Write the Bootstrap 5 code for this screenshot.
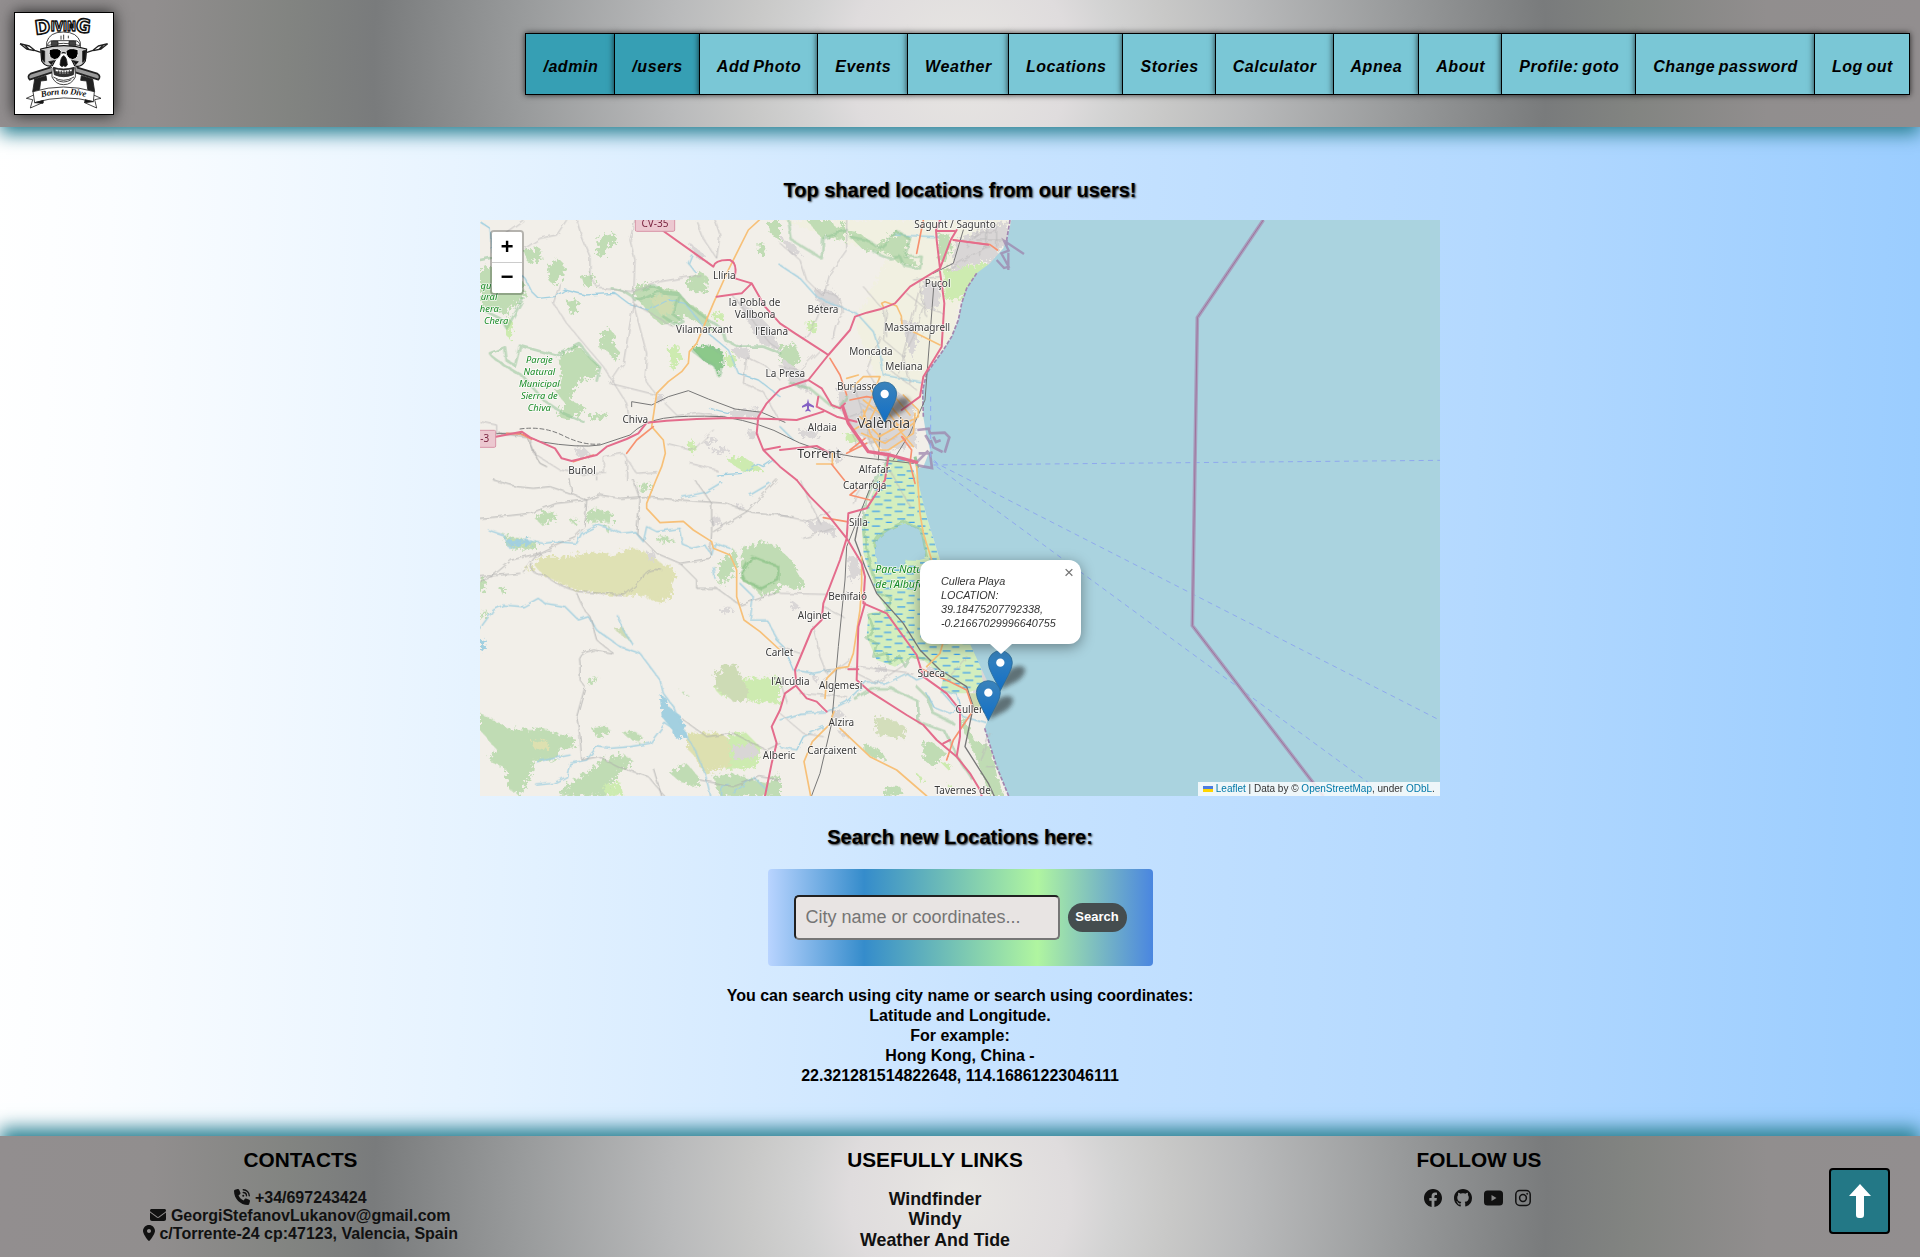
<!DOCTYPE html>
<html lang="en">
<head>
<meta charset="utf-8">
<title>Diving locations</title>
<link rel="stylesheet" href="https://cdn.jsdelivr.net/npm/bootstrap@5.3.0/dist/css/bootstrap.min.css">
<script src="https://cdn.jsdelivr.net/npm/bootstrap@5.3.0/dist/js/bootstrap.bundle.min.js"></script>
<style>
body{font-family:"Liberation Sans",Arial,sans-serif;color:#000;min-height:1257px;line-height:1.25;overflow-x:hidden;
 background:linear-gradient(92deg,#fff 0,#fbfdff 6%,#e4f2ff 27%,#c8e3ff 52%,#b4d9ff 76%,#99ccff 100%)}
.metal{background:radial-gradient(circle,#e8e6e3 0,#dfdcdd 11.5%,#d3d3d3 16%,#c8c8c7 22%,#b9babb 30%,#989a9b 46%,#797b7c 61%,#828481 70%,#918e8e 84%,#928e8f 100%);z-index:2}
header.metal{height:127px;padding:0 10px 0 14px;box-shadow:0 7px 17px #2c8294}
.logo-box{width:100px;height:103px;border:1px solid #000;background:#fff;box-shadow:0 0 14px #222}
.menu-bar{height:62px;margin-top:1px}
.menu-bar a{display:flex;align-items:center;padding:5px 16px 0 17px;margin-left:-1px;border:1px solid #000;background:#7ac7d6;color:#000;font:italic bold 16px "Liberation Sans",Arial,sans-serif;letter-spacing:.56px;word-spacing:-1.500px;text-decoration:none;box-shadow:0 0 6px rgba(0,0,0,.75);white-space:nowrap}
.menu-bar a.staff{background:#369fb4}
.main-title{font-size:20px;font-weight:bold;line-height:24px;text-shadow:1px 1px 2px #333;margin:0}
.map-box{width:960px;height:576px;margin-top:18px;overflow:hidden;background:#f2efe9}
.map-box>svg{display:block}
.zoom-ctl{left:10px;top:10px;width:34px;border:2px solid rgba(0,0,0,.25);border-radius:4px;background-clip:padding-box}
.zoom-ctl span{display:block;height:30px;background:#fff;text-align:center;font:bold 22px/34px "Liberation Mono",monospace;color:#000}
.zoom-ctl span:first-child{border-bottom:1px solid #ccc;height:31px;border-radius:2px 2px 0 0}
.zoom-ctl span:last-child{border-radius:0 0 2px 2px;line-height:32px}
.pop-up{left:440px;top:340px;width:161px;height:84px;background:#fff;border-radius:12px;box-shadow:0 3px 14px rgba(0,0,0,.4);padding:14px 0 0 21px;font:italic 10.8px/14px "Liberation Sans",Arial,sans-serif;color:#333}
.pop-up::after{content:"";position:absolute;left:70px;top:84px;border:11px solid transparent;border-top:10px solid #fff;border-bottom:0}
.pop-close{right:7px;top:5px;font:normal 17px/16px "Liberation Sans",Arial,sans-serif;color:#757575}
.attrib{right:0;bottom:0;height:14px;width:242px;padding:0 5px;background:rgba(255,255,255,.8);font-size:10px;line-height:14px;color:#333;white-space:nowrap}
.attrib a{color:#0078a8;text-decoration:none}
.search-box{width:385px;height:97px;margin-top:20px;padding:0 26px;border-radius:4px;background:linear-gradient(90deg,#b9d4ff 0,#358ccb 25%,#b0f5a0 70%,#4a86e0 100%)}
.search-box input{width:266px;height:45px;border:2px inset #767676;border-radius:5px;background:#e8e4e3;padding:0 10px;font-size:18px}
.search-box input::placeholder{color:#757575}
.search-box button{width:59px;height:29px;margin-left:8px;border:0;border-radius:15px;background:#454d4f;color:#fff;font-size:13px;font-weight:bold;padding:0}
.hint{font-size:16px;font-weight:bold;line-height:20px;margin:20px 0 0;text-align:center}
footer.metal{height:121px;box-shadow:0 -8px 17px #2c8294;padding-top:12px;font-weight:bold;display:grid;grid-template-columns:601px 668px 420px 1fr}
footer h2{font-size:20.8px;font-weight:bold;line-height:24px;margin:0}
.contact-list{color:#111;font-size:16px;line-height:18px;margin-top:17px}
.contact-list svg{vertical-align:-2px}
.link-list{color:#111;font-size:17.8px;line-height:20.5px;margin-top:16.5px}
.social-row{gap:12px;margin-top:17px;padding-right:4px}
.up-btn{width:61px;height:66px;border:2px solid #000;border-radius:4px;background:#237886;margin:20px 30px 0 0}
.gr{fill:#c0dcb4}.gs{fill:#cdebb0}.ub{fill:#d9d6d6}
.mn,.mw,.pr,.rl,.rv,.pk,.sc{fill:none;stroke-linejoin:round;stroke-linecap:round}
.mn{stroke:#bcbabb;stroke-width:2.6}.mw{stroke:#e46c8c;stroke-width:6}.pr{stroke:#f7c078;stroke-width:5}
.sc{stroke:#f7916f;stroke-width:5}.rl{stroke:#777;stroke-width:3}.rv{stroke:#a3d0e0;stroke-width:4}
.pk{stroke:#8cc192;stroke-opacity:.5;stroke-width:8}
.lb text{font:30px "Noto Sans",sans-serif;fill:#3a3a3a;paint-order:stroke;stroke:#fff;stroke-opacity:.75;stroke-width:5px;stroke-linejoin:round;text-anchor:middle}
.lb .big{font-size:41px}.lb .nat{font-style:italic;font-size:28px;fill:#178a24}
.lb .end{text-anchor:end}
</style>
</head>
<body class="d-flex flex-column">
<header class="metal d-flex align-items-center justify-content-between position-relative">
 <div class="logo-box">
 <svg width="98" height="101" viewBox="45 40 294 303" fill="none" stroke="#222" stroke-width="2.5" stroke-linejoin="round">
  <g font-family="DejaVu Sans" font-weight="bold" fill="#fff" stroke="#111" stroke-width="5">
   <text x="107" y="104" font-size="58" textLength="46" lengthAdjust="spacingAndGlyphs" transform="rotate(-7 120 100)">D</text>
   <text x="152" y="93" font-size="42" textLength="76" lengthAdjust="spacingAndGlyphs">IVIN</text>
   <text x="226" y="98" font-size="56" textLength="44" lengthAdjust="spacingAndGlyphs" transform="rotate(7 245 95)">G</text>
  </g>
  <path d="M60 132L88 139 104 152 122 158M60 132L80 148 103 153M74 136l14 14M323 132l-28 7-16 13-18 6M323 132l-20 16-23 5M310 136l-14 14" stroke-width="4"/>
  <path d="M152 203L92 222Q80 230 89 240L156 218M230 203l62 19q12 8 3 18L226 218" fill="#999" stroke-width="5"/>
  <path d="M104 238l-6 38h20l4-32 18-2-2-14zM278 238l6 38h-20l-4-32-18-2 2-14z" fill="#222"/>
  <path d="M140 150V128Q148 97 190 97Q232 97 241 128V150L250 180 226 205V232Q215 255 191 255Q167 255 156 232V205L131 180z" fill="#fff"/>
  <path d="M142 138q4-15 16-15h66q14 0 16 15-50-14-98 0z" fill="#fff"/><path d="M154 125h20v12h-20zM207 125h20v12h-20z" fill="#444"/>
  <path d="M122 148q70-20 138 0l-4 36q-14 22-32 14l-17-34q-17-10-32 0l-18 34q-19 6-32-14z" fill="#ccc" stroke="#111" stroke-width="3.5"/>
  <path d="M124 152l10 2v34l-9-10zM258 152l-10 2v34l9-10z" fill="#111"/>
  <path d="M148 150q30-9 36 6-1 20-20 24-20-4-16-30zM234 150q-30-9-36 6 1 20 20 24 20-4 16-30z" fill="#000" stroke="#eee" stroke-width="3"/>
  <path d="M180 196q2-25 11-28 9 3 11 28-5 8-11 2-6 6-11-2zM146 186l16-3-8 12zM235 186l-16-3 8 12z" fill="#111"/>
  <path d="M160 203q30 10 63 0l-3 22q-29 12-57 0z" fill="#333"/><path d="M166 208q25 7 50 0v7q-25 7-50 0zM169 219q22 6 45 0" fill="#fff" stroke-width="1.5"/>
  <path d="M176 212v10M184 213v10M192 213v10M200 213v10M208 211v10M160 232q30 20 62 0M168 240q22 14 46 0M183 108v12M191 105v15M205 108v8"/>
  <path d="M101 286L79 296 98 300 91 325 130 308zM281 286l22 10-19 4 6 25-38-17z" fill="#fff"/>
  <path d="M99 276Q190 248 283 276L280 306Q190 282 104 309z" fill="#fff"/>
  <path d="M104 309l26-7-1 9zM280 306l-25-6v9z" fill="#111"/>
  <path id="ribbon" d="M120 294Q190 274 264 293" stroke="none"/>
  <text font-family="Liberation Serif" font-style="italic" font-weight="bold" font-size="26" fill="#111" stroke="none"><textPath href="#ribbon" startOffset="5" textLength="134">Born to Dive</textPath></text>
 </svg>
 </div>
 <nav class="menu-bar d-flex">
  <a class="staff">/admin</a><a class="staff">/users</a><a>Add Photo</a><a>Events</a><a>Weather</a><a>Locations</a><a>Stories</a><a>Calculator</a><a>Apnea</a><a>About</a><a>Profile: goto</a><a>Change password</a><a>Log out</a>
 </nav>
</header>
<main class="d-flex flex-column align-items-center flex-grow-1" style="padding-top:51px">
 <h1 class="main-title">Top shared locations from our users!</h1>
 <div class="map-box position-relative">
 <svg width="960" height="576" viewBox="0 0 2880 1728">
  <defs>
   <filter id="rag" x="-10%" y="-10%" width="120%" height="120%"><feTurbulence type="fractalNoise" baseFrequency=".09" numOctaves="3" seed="4"/><feDisplacementMap in="SourceGraphic" scale="34"/></filter>
   <filter id="wob" x="-5%" y="-5%" width="110%" height="110%"><feTurbulence type="fractalNoise" baseFrequency=".04" numOctaves="2" seed="7"/><feDisplacementMap in="SourceGraphic" scale="14"/></filter>
   <filter id="soft" x="-30%" y="-30%" width="160%" height="160%"><feGaussianBlur stdDeviation="7"/></filter>
   <pattern id="marsh" width="68" height="44" patternUnits="userSpaceOnUse"><rect width="68" height="44" fill="#d4eebe"/><path d="M4 6h24M40 17h22M12 29h24M46 39h18" stroke="#3b9ff0" stroke-width="3.400"/></pattern>
   <linearGradient id="pinfill" x2="0" y2="1"><stop stop-color="#3a83bb"/><stop offset="1" stop-color="#126fc6"/></linearGradient>
   <g id="pin">
    <path d="M0-3L10-42 32-66Q62-82 74-66 76-48 52-30z" fill="#222" opacity=".55" filter="url(#soft)"/>
    <path d="M0 0L-25-49Q-36-70-36-84A36 36 0 0 1 36-84Q36-70 25-49z" fill="url(#pinfill)" stroke="#2e6c97" stroke-width="2.500"/><circle cy="-84" r="12.500" fill="#fff"/>
   </g>
  </defs>
  <!-- land cover -->
  <g filter="url(#rag)">
   <g transform="translate(0 -150)">
    <path class="gr" d="M355 205l30-10 20-5 5 20-30 25-10 25-25-5 10-25zM205 290l30-25 20 20-5 30-30 30-15-15zM305 320l35-12 5 35-30 10zM130 240l50-5 5 30-40 15zM262 395l35-5-5 30-20 15zM360 500l25-30 20 25-5 30 18 20-15 28-20-30-22-5zM620 330l40-25 22 15-5 45-30 5-25-10zM835 220h18v35h-16zM0 300l40-15 90 50 5 40-60 60-75-30z"/>
    <path class="gr" d="M470 350q30-15 60 0l60 10 30 35 60 40 20 50-30-20-60-30-15 20-50 10-30-25-35-45-20-15z"/><path d="M510 385l45-15 25 25-5 35-30 10z" fill="#cfdcb0"/>
    <path class="gr" d="M235 560l60-35 30 35 35 30-15 35-45 5-20 35-10 25 50 25-50 35-40-10 25-40-30-40 20-30z"/>
    <path class="gr" d="M330 735l55-5-5 15-50 8zM860 150h40v60l-30-20z"/><path d="M635 535l40-10 50 15 5 40-15 40-12-30-30-15z" fill="#8cc98a"/>
    <path class="gs" d="M85 440l15 20-10 50-15-20zM565 535l30-10 10 40-30 35zM730 560l35-10 5 35-25 5zM700 430h30v20h-28zM620 830l20-20 10 30-20 8zM740 870l50-10 60 40-60 5z"/>
    <path class="ub" d="M630 220l45 35-5 20-30-20zM285 835l25-5 25 25-40 10zM530 670l22 5-2 20-24 4zM770 390l50 30 60 60 20 60-60-20-40-70zM750 720l90-5v30l-90-5zM690 840l50-10 5 15-50 5zM800 785l30-2v25h-25zM750 535l50-5 10 30-30 10zM670 815l35-15 5 12-30 15z"/>
   </g>
   <g transform="translate(900 -150)">
    <path d="M0 150h690l-20 90-90 60-40 100-20 110-70 80-20 70 4 90-60-10-30 20-120-300 100-200z" fill="#f0f0dc" opacity=".6"/>
    <path class="gr" d="M80 150h70l20 25 25-20v60l-40-15-30 5zM210 185l30 5 50 40 60-45 40 15-15 60 35 15-10 15-50-15-20-25-80-10-40-40zM475 195l30-5 10 40-20 50-20-10zM0 530l45-10 15 40-20 40-40-25z"/>
    <path class="gs" d="M490 300l60-10 80-10-55 80-30 25-50 5z"/><path d="M80 455l30 0-5 35-25-10z" class="gs"/>
    <path class="ub" d="M0 200l45 25 20 30-35-5zM530 210l150-60 10 65-40 30 20 20-100 20-60 20zM100 355l70 10 15 45-60 15zM360 445l60 20-5 40-20 60zM0 560l70 50 20 60-60-30zM170 660l150-20 80 60 10 130-90 10-90-50-50-70zM130 840l60 5-5 30-50-5zM310 840l50 20-10 60-30-10zM60 780l60 5-10 20-50-5zM425 330l60 20-10 60-40 10z"/>
    <path class="gs" d="M190 795l40-8 8 28-35 5z"/>
   </g>
   <g transform="translate(0 780)">
    <path d="M160 250l30-20h80l70-15 60 10 50-20 40 8 60 40 20 30 10 60-35 28-60-25h-80l-120-15-100-50z" fill="#dfe1b4"/>
    <path d="M160 265l-30 10 30-25zM500 260l55-5 25 5 8 30-35 65-45-20z" fill="#dfe1b4"/>
    <path d="M500 218l25-3 3 25-22 3zM735 140l40-12M760 80l30-5v15zM690 120l25-12 12 20-30 15zM730 380l30 5-10 15-25 5z" class="ub"/>
    <path class="gr" d="M165 115l30-20 35 5-5 15-40 20zM315 105l30-18 55 10-5 35-30-10-45 5zM268 125l25-10-5 20zM70 165l25 5 80 15-5 20-60 5-30-10zM525 180l20-12 45 15-30 5zM375 145l15-5-5 20zM475 20l35-15v25l-30 5zM785 205l60-20 55 15v130l-60 20-10-20-45-30zM715 250l50-40 10 30-20 50-40 30zM60 330l15-10v30zM0 295l15-5 3 30-18 25zM0 400l30-10-30 30z"/>
    <path class="gr" d="M0 700l50 25 40 25 100-5 30 15 60 10 5 30-45 10-15 30-65 5-5 40-40 60-30-20-10-60-50-25 25-30-50-60zM240 948l10-25 80-50 40-35 60-15 30 20-30 25-50 55 10 25zM430 760l30-8 30 20-10 15-30-8zM325 600l30-12-10 15-20 15zM335 745l50-8 5 20-40 15zM600 630l20 10-5 8z"/>
    <path class="gs" d="M700 620l40-15 80-10 80-5v80l-80-5-100-20zM745 765l50-10 50 50-20 60-90 5zM370 920l50-15 10 40-50 3z"/>
    <path d="M700 590l35-35 35-5 10 40 20 30 5 40-40 8-30-25-25-10z" fill="#cddbb5"/>
    <path d="M625 760l90-5 30 20 10 80-80 25-35-55-20-20zM155 785l45-5 5 25-40 5z" fill="#dde0b0"/>
    <path d="M570 880l50-30 40 45-10 25-50-15zM700 890l60-10 100 30 40-30v70H720z" class="gr"/>
    <path d="M405 450l25-8 25 45z" fill="#cddbb5"/><path d="M760 800l60-10 20 30-30 15-50 5z" class="ub"/>
    <path d="M540 655l15-5 10 30 40 30 15 60-30 10-20-40-25-30z" fill="#a3d0e0"/><path d="M75 180h80v12l-60 8zM0 480l18-2-5 30-13 5z" fill="#a3d0e0"/>
   </g>
   <g transform="translate(900 780)">
    <path class="gr" d="M0 210l40 35 10 30 25 35-25 20-50-20zM250 790l50 20 20 30-40-5-30-25zM430 780l30 10 40 30-40 40-30-20zM320 920h40l10 25-60 3zM555 710l25 70 50 20 40 148h-40l-40-110-50-110z"/>
    <path d="M285 710l40 5 55 30-10 30-80-10z" fill="#d3debb"/><path class="gs" d="M500 910l20 10-10 10zM410 880l25 20-15 10zM480 845l35 10-10 15z"/>
    <path class="ub" d="M75 130l55-10 40 25-10 20-60-10zM205 230l30-5 5 60-30 20zM35 360l25 20-25 15zM165 345l50-5-10 20zM90 590l20-5v25zM150 700l30-10 20 20-40 10zM170 750l35 10-10 20zM440 560l50 10-5 20-40-5zM280 560l40-3-3 20-35-3zM560 570l50-10 15 80-40 5z"/>
   </g>
  </g>
  <!-- albufera wetland -->
  <g transform="translate(900 780)">
   <path d="M270 60Q300-20 325-70L385-60 415 0 440 110 480 240 600 540 610 620 560 640 480 640 490 590 430 540 390 535 345 560 290 540 260 470 265 400 320 390 290 340 250 220 245 130z" fill="url(#marsh)"/>
   <path d="M288 190l15-25 30-20 45-15 40 15 15 40 5 50-20 5-40-2-10 28-30 5-50-20z" fill="#aad3df" filter="url(#wob)"/>
   <path class="pk" filter="url(#wob)" d="M325-60Q255 40 250 100q0 100 45 240l35 10-5 45-60 10 15 40-20 30 30 15-10 40 40-10 10 30 30-20 15 30 20-30 60 10M285 200q-5-40 90-75l50 25 15 80"/>
   <path d="M570 640l30 0 10 40-30 15z" fill="#cdd9ad"/>
   <path d="M405-70L440 80 500 260 620 560" fill="none" stroke="#9cc79b" stroke-width="9"/>
  </g>
  <!-- sea -->
  <path d="M1594 0L1580 60 1570 85 1530 130 1490 160 1460 205 1445 250 1435 300 1415 350 1390 390 1360 430 1340 460 1328 510 1330 590 1338 640 1350 690 1330 740 1312 745 1315 790 1340 890 1380 1020 1460 1250 1520 1380 1555 1440 1523 1500 1514 1525 1550 1640 1586 1728H2880V0z" fill="#aad3df"/>
  <path d="M1590 0L1580 60M1490 160L1460 205 1445 250 1435 300 1415 350 1390 390 1340 460 1328 510 1330 590M1514 1525L1550 1640 1586 1728" fill="none" stroke="#a387b0" stroke-width="5" stroke-dasharray="12 5"/>
  <path d="M1550 120l22 24 14-4-22-40 22-8-14-30 60 40M1580 60v20M1585 98v52" fill="none" stroke="#9c84ac" stroke-width="7" opacity=".75"/>
  <path d="M1312 630l34-4 4 14 44-2 14 14-14 46M1336 645l18 30M1352 660l8 22 28 14M1360 650l8 16 14-5M1345 692l-34 34M1312 736l44 8-6-44 8-3M1316 700h30" fill="none" stroke="#9c84ac" stroke-width="8" opacity=".75"/>
  <g fill="none" stroke="#8fa9ee" stroke-width="3" stroke-dasharray="15 13"><path d="M1360 735L2880 721M1360 725L2880 1501M1370 740L2720 1728M1352 530v180l20 20"/></g>
  <path d="M2350 0L2152 293 2137 1217 2530 1728" fill="none" stroke="#a79fbe" stroke-width="11"/><path d="M2350 0L2152 293 2137 1217 2530 1728" fill="none" stroke="#a0739c" stroke-width="3"/>
  <!-- water and park outlines -->
  <g filter="url(#wob)">
   <g transform="translate(0 -150)">
    <path class="rv" d="M0 155l30 20 5 70 100 80 20 40 20 20 50-5 30-20 60 15 90-5 40 30 60 20 60-30 50 10 40 50 30 40 60 50 30 70 60 20 65 50M690 715l60 15M880 870l-30 20-20-10-40 30-80 5M635 255l-10 25 20 25"/>
    <path class="pk" d="M395 355q50 5 70 35h20l50-25 60 5 30 35 60 45 40 25 10 35 40 20h75l50 20M30 550l45-18 5 40 25 15 15-60 110 30 70-35 30 40 30 30-10 40M30 550q-5 10 100 70l60 70 60 40 60 25M0 270l40-8M0 415l60 30 20 30 50-90M490 360q40-25 60 10l50 5-20 60 30 20-20 10-40-25"/>
    <path d="M635 540l45-12 45 20 5 30-15 40-10-30-35-20z" class="pk"/>
   </g>
   <g transform="translate(900 -150)"><path class="rv" d="M0 285l60 40 50 55 40 20 80 30 50 55 20 60 10 70 110 20M345 195l130 5M0 770l40 40"/><path class="pk" d="M25 150l10 60 90 55 5-60 70-25M210 200l50 10 40 25 50-50 40 20-15 55 50 0-5 35-50-10-10-25-30 5-50-20M30 640l60 15 60 50 30 5 20-30"/></g>
   <g transform="translate(0 780)">
    <path class="rv" d="M25 150l45 15 20 40 40-25 60 10 40-5 60 5 15-30 50-25 30 10 40 15 40-5 25 30 10-45 30 15 70-10 10 50 25 10 40-10 20 30 10-35 45 15M605 52l70-15 50-30M0 445l40-55 30-15 60 5 45-25 20 15 60 10 40 40 30-10 25 40 70 50 60 20 60 80 10 40 30 40 25 60 50 90 20 50 20 80 60 20 20 50M780 310l40 40-10 70 50 0 35 60M350 800l40 5 60-5 60-10 45-60 30 20M350 800l-30 40-50 10-10 40-40 20-50 5M170 845l100-20M415 410l15 40 30 45M810 45l60-35M700 260l5 35"/>
    <path class="pk" d="M785 280l30-50 80 30v40l-50 25-50-20z" style="stroke:#6fb56f"/>
    <path class="rv" d="M725 948v-30l20-5M760 940l60-50 40 40" stroke-width="3"/>
   </g>
   <g transform="translate(900 780)"><path class="rv" d="M-10 480l20 20 30 70 60 10 50-10M0 720l60-20 80-5 60-30 60-60 60 5 60-30 30 20 50-20M0 800l50 10 20-40 60-30M440 640l20 40 50 20 30-20-10-40-30-5M490 640l60 70 70 20"/><path class="pk" d="M225 655l50-30 60 0 80 40v60l80 30 40 80 40 60M410 620l30 30 20 50 60 30"/></g>
  </g>
  <!-- local roads -->
  <g filter="url(#wob)">
   <g class="mn" transform="translate(0 -150)"><path d="M260 150l-30 45-50 10-45 30M290 150l15 50 25 60v60l20 30 10-5M465 150l-15 60 15 60-5 130-30 180-40 60M360 355l100 10 80-30 120-20M240 340l-20 60 40 60 110 130 70 110 10 60M460 400l120 70M460 400l40 150-5 80 30 40M390 640l60 15 80 20M650 155l20 50 40 60 10-70-15-45M130 150l-70 50M555 700l40 40 60-10 80 10M800 560l-10 80 60 25 50 90M800 560l60 30 40 40M0 755l50 10 0 30 60 0M150 800l10 50 80 50 60 10h80M370 910V860l60-10 40 60 60-5M560 820l80 20 60-60M440 870v60M760 380l50 60 60 80 30 20M630 880l80 20M350 920v10"/><path d="M60 790l80 10 40 80 20 10" stroke="#999"/></g>
   <g class="mn" transform="translate(900 -150)"><path d="M0 220l60 50 20 60 50 50 20-70 50-70v-90M125 370q60-10 65 60-30 30-30 80M250 350l60 70 10 80M130 400l-30 70-30 40M380 370l50 40-30 90-30 60M420 360l20 80M500 300l120-70M320 420l-10 90 60 50 20 80M400 330l80-10M425 330l-70 280M0 590l60 10 60-60M300 500l-40 100 30 50M330 600l80 60M225 660l60 200M330 700l-60 90M240 700l120 70M210 740l150-60M190 700l40 130 120-30M600 260q-10-25 30-30M570 200l80-20M590 210l80 0M620 160v60M650 160v70M560 230l60-80M460 420l30 10M430 470h50"/></g>
   <g class="mn" transform="translate(0 780)"><path d="M0 115l60-5 90-10 80-30 90-10 40-15 60 10 70-5 110 10 140 10 80 30 120 10M40 0l70 20 50 5 50-5 60 20 50 20-5 80-30 30-60 25-50 25-80 20-60 50-70 30M270 0l5 40M460 0l20 60-10 100 60 60 70 30 90-15 5-80 0-85-50-70M130 275l30-45 50-20M155 250q-10 35 40 35 30 30 100 50l140 10 50-45q10-40 60-30M290 340q20 50 40 70l20 70 50 40-60-10q-50 10-40 40v50l15 20-25 90 10 60 5 70 50-10 60 30 90 30 50 60 90 40 20-40 50 15 60 10M600 250l50 50v25l60 0 70 50 120-40M700 155l100-60 90-95M610 720l70 50 80-10 100 50 40-20M520 865l25 83M660 900l100 20 80-30 60 10M0 290l120-10" stroke="#aaa"/></g>
   <g class="mn" transform="translate(900 780)"><path d="M0 105l90 20 60-30M70 175l90-30M330-30l60 110M60 0l60 130M0 340l220 5M130 380l60 30M100 440l20 90 20 50M0 500l60 20M140 570l100-10 160 20M0 700l70 60 60 10M560 530l-60 70M630 760l-30 80M620 860h35M60 640l140 10M0 600l20 70M220 70q10-50 50-60M230 580l60 30 90-60M210 540l-80 60"/></g>
  </g>
  <!-- railways -->
  <g class="rl"><path d="M50 640l70 0 60 25q120 20 180 10l90-30q40-40 100-50t180-5q120 20 190 60t200 60l180 20M455 560v-15l60 10 50-25 60-18 60 25 80 30 80 10 70 30M1362 190L1335 540 1290 640 1240 720M1360 160l60-30 30-100M1200 640l-5 80M1180 780l-80 200-5 100-20 200-20 230-35 150-30 80"/><path d="M1135 910l-10 50 30 80 35 80 80 90 50 80 60 60 80 50 20 60-25 120 70 110 60 130" stroke-width="4"/><path d="M120 627q70-10 130 20t110 25" stroke-dasharray="12 8"/></g>
  <!-- orange roads -->
  <g class="pr"><path d="M838 0L805 30 765 110 745 150 700 250 675 310 650 370 628 395 625 430 605 455 565 485 530 520 522 575 515 620 550 660 556 700 545 740 528 780 500 850 500 865 540 908 610 904 640 930 695 965 700 985 750 1005 770 1050 770 1130 792 1200 840 1235 900 1290M1210 260l-5-10 10-5 35 13 14 30 2 25M1300 335l80 40M1120 500l30-30 50 0-20 50M1100 475l35-10M1150 540l100 80 50 60M1180 520l-30 70M1210 520l-40 80-50 30M1140 590l60 60 80-50M1165 500l100 130M1145 640l70 30 85-60M1195 650l120-60v-20l-45-45M1150 570l20 70 30 50 25 0 75-50 5-60M1220 545l60 70M1240 525l50 60M1145 1010l0 80-5 80-20 130-15 40-35 5-30 30-5 60M1062 1475l-15 40-50 50-25 60 20 103M1080 1525l90 85 80 40 90 78M1310 740l10 140 10 60 25 80M1400 1230l-20 70-40 40M1010 732l50 0M1057 695v35"/></g>
  <g class="sc"><path d="M520 620l-50 40-30 40M1110 540l50-10 60 10M1050 415l30 50 20 60M1100 700l60-30M1110 690l45-35M1330 0l-20 100M1420 60l110 14 22 16M1265 650l30 40-5 40 15 60M1055 733l40 50M1140 800l-30 25 60 15M1030 893l70 12M1320 1345l90 40 50 25 20 60-60 90-20 60M1275 660l-8-10M80 640l40 2M125 643l30 15M280 725l60-20"/></g>
  <!-- motorways -->
  <g class="mw">
   <path d="M550 33L700 140q5-22 50-20 22 10 15 45v10l50 15-30 30-75 10M815 190L855 260 900 310 945 340 1030 395 1045 405M0 650L48 650 125 635 150 652 225 685 245 715 275 723 350 705 380 680 440 657 475 640 500 608 560 602 650 597 750 594 900 598 950 600 1030 575M1010 560l5-30M835 590L860 550 900 508 985 480 1045 405 1110 330 1125 290 1160 278 1200 268 1245 250 1290 200 1380 145M1380 145L1370 60 1368 30 1380 0M1380 145L1412 60 1430 30M1368 33h55M1420 60l105 14M1380 155L1393 250 1385 380 1330 470 1320 530 1265 570M985 480l40 25 30 50 25 10 15-15M1010 560l60 30 60 15M835 590L830 640 850 690 900 740 950 780M900 690L1010 678 1050 700M850 690l50-10"/>
   <g transform="translate(900 780)"><path d="M50 0L90 50 140 100 200 175 245 250 255 290 250 370 320 400 410 525 430 590 500 640 540 690 540 770 530 830M200 175L180 240 130 370 125 420 95 450 45 570 50 620 80 655 110 665 140 695M50 615L15 640 0 690 -25 740 -10 790 -25 850 -45 948M200 175L205 100 260 85 315 0 325-70M255 370L235 440 230 600 270 635 380 705 430 735 470 780 530 830 570 880 600 930 605 948M205 568h30M490 790l20-10"/></g>
  </g>
  <path d="M1088 560L1105 610 1140 660 1165 695 1230 705 1310 727" class="mw" style="stroke-width:10"/>
  <path d="M984 536l3 13 15 9v5l-15-5v9l5 5v3l-8-3-8 3v-3l5-5v-9l-15 5v-5l15-9z" fill="#8461c4"/>
  <!-- names -->
  <g class="lb">
   <g transform="translate(0 -150)">
    <rect x="466" y="120" width="118" height="64" rx="4" fill="#ecc8d0" stroke="#d894a8" stroke-width="3"/><text x="525" y="171" style="fill:#7a2440;stroke:none">CV-35</text>
    <rect x="-20" y="781" width="67" height="51" rx="4" fill="#ecc8d0" stroke="#d894a8" stroke-width="3"/><text x="14" y="817" style="fill:#7a2440;stroke:none">-3</text>
    <g><text class="nat" x="178" y="580">Paraje</text><text class="nat" x="178" y="616">Natural</text><text class="nat" x="178" y="652">Municipal</text><text class="nat" x="178" y="688">Sierra de</text><text class="nat" x="178" y="723">Chiva</text>
    <text class="nat end" x="34" y="357">qu</text><text class="nat end" x="52" y="391">ural</text><text class="nat end" x="65" y="426">hera-</text><text class="nat end" x="85" y="463">Chera</text></g>
    <text x="733" y="327">Llíria</text><text x="824" y="407">la Pobla de</text><text x="825" y="444">Vallbona</text><text x="673" y="489">Vilamarxant</text><text x="875" y="495">l'Eliana</text><text x="916" y="621">La Presa</text><text x="466" y="760">Chiva</text><text x="306" y="911">Buñol</text>
   </g>
   <g transform="translate(900 -150)"><text x="525" y="174">Sagunt / Sagunto</text><text x="473" y="351">Puçol</text><text x="129" y="429">Bétera</text><text x="412" y="483">Massamagrell</text><text x="273" y="555">Moncada</text><text x="372" y="601">Meliana</text><text x="237" y="660">Burjassot</text><text class="big" x="311" y="773">València</text><text x="127" y="782">Aldaia</text><text x="117" y="864" style="font-size:38px">Torrent</text><text x="283" y="908">Alfafar</text></g>
   <g transform="translate(900 780)"><text x="254" y="28">Catarroja</text><text x="235" y="139">Silla</text><text class="nat" style="font-size:32px;text-anchor:start" x="286" y="280">Parc Natural</text><text class="nat" style="font-size:32px;text-anchor:start" x="286" y="323">de l'Albufera</text><text x="203" y="359">Benifaió</text><text x="103" y="417">Alginet</text><text x="-2" y="529">Carlet</text><text x="31" y="615">l'Alcúdia</text><text x="182" y="626">Algemesí</text><text x="454" y="592">Sueca</text><text x="576" y="699">Cullera</text><text x="184" y="737">Alzira</text><text x="156" y="822">Carcaixent</text><text x="-3" y="836">Alberic</text><text x="548" y="942">Tavernes de</text></g>
  </g>
  <use href="#pin" x="1214" y="606"/><use href="#pin" x="1561" y="1412"/><use href="#pin" x="1525" y="1502"/>
 </svg>
 <div class="zoom-ctl position-absolute"><span>+</span><span>−</span></div>
 <div class="pop-up position-absolute"><span class="pop-close position-absolute">×</span>Cullera Playa<br>LOCATION:<br>39.18475207792338,<br>-0.21667029996640755</div>
 <div class="attrib position-absolute"><svg width="10" height="6"><path fill="#4c7be1" d="M0 0h10v3H0z"/><path fill="#ffd500" d="M0 3h10v3H0z"/></svg> <a href="#">Leaflet</a> | Data by © <a href="#">OpenStreetMap</a>, under <a href="#">ODbL</a>.</div>
 </div>
 <h2 class="main-title" style="margin-top:29px">Search new Locations here:</h2>
 <form class="search-box d-flex align-items-center"><input placeholder="City name or coordinates..."><button type="button">Search</button></form>
 <p class="hint">You can search using city name or search using coordinates:<br>Latitude and Longitude.<br>For example:<br>Hong Kong, China -<br>22.321281514822648, 114.16861223046111</p>
</main>
<footer class="metal position-relative text-center">
 <section><h2>CONTACTS</h2>
  <div class="contact-list">
   <div><svg width="16" height="16" viewBox="0 0 512 512" fill="#111"><path d="M164.900 24.600c-7.700-18.600-28-28.500-47.400-23.200l-88 24C12.100 30.200 0 46 0 64C0 311.400 200.600 512 448 512c18 0 33.800-12.100 38.600-29.500l24-88c5.300-19.400-4.600-39.700-23.200-47.400l-96-40c-16.300-6.800-35.200-2.100-46.300 11.600L304.700 368C234.300 334.700 177.300 277.700 144 207.300L193.300 167c13.700-11.200 18.400-30 11.600-46.300z"/><path d="M296 24A192 192 0 0 1 488 216M296 112A104 104 0 0 1 400 216" fill="none" stroke="#111" stroke-width="44" stroke-linecap="round"/><circle cx="296" cy="216" r="32"/></svg> +34/697243424</div>
   <div><svg width="16" height="16" viewBox="0 0 512 512" fill="#111"><path d="M48 64C21.500 64 0 85.500 0 112c0 15.100 7.100 29.300 19.200 38.400L236.800 313.600c11.400 8.500 27 8.500 38.400 0L492.800 150.400c12.100-9.100 19.200-23.300 19.200-38.400c0-26.500-21.500-48-48-48H48zM0 176V384c0 35.300 28.700 64 64 64H448c35.300 0 64-28.700 64-64V176L294.400 339.200c-22.800 17.100-54 17.100-76.800 0z"/></svg> GeorgiStefanovLukanov@gmail.com</div>
   <div><svg width="12" height="16" viewBox="0 0 384 512" fill="#111"><path d="M215.700 499.200C267 435 384 279.400 384 192C384 86 298 0 192 0S0 86 0 192c0 87.400 117 243 168.300 307.200c12.300 15.300 35.100 15.300 47.400 0zM192 256c-35.300 0-64-28.700-64-64s28.700-64 64-64s64 28.700 64 64s-28.700 64-64 64z"/></svg> c/Torrente-24 cp:47123, Valencia, Spain</div>
  </div></section>
 <section><h2>USEFULLY LINKS</h2><div class="link-list">Windfinder<br>Windy<br>Weather And Tide</div></section>
 <section><h2>FOLLOW US</h2>
  <div class="social-row d-flex justify-content-center align-items-center">
   <svg width="18" height="18" viewBox="0 0 16 16" fill="#111"><path d="M16 8.049c0-4.446-3.582-8.050-8-8.050C3.580 0 0 3.603 0 8.050c0 4.017 2.926 7.347 6.750 7.951v-5.625h-2.030V8.050H6.750V6.275c0-2.017 1.195-3.131 3.022-3.131.876 0 1.791.157 1.791.157v1.980h-1.009c-.993 0-1.303.621-1.303 1.258v1.510h2.218l-.354 2.326H9.250V16c3.824-.604 6.750-3.934 6.750-7.951z"/></svg>
   <svg width="18" height="18" viewBox="0 0 16 16" fill="#111"><path d="M8 0C3.580 0 0 3.580 0 8c0 3.540 2.290 6.530 5.470 7.590.4.070.55-.17.55-.38 0-.19-.01-.82-.01-1.490-2.010.37-2.530-.49-2.690-.94-.09-.23-.48-.94-.82-1.130-.28-.15-.68-.52-.01-.53.63-.01 1.080.58 1.230.82.72 1.210 1.870.87 2.330.66.07-.52.28-.87.51-1.070-1.780-.2-3.640-.89-3.640-3.950 0-.87.31-1.590.82-2.150-.08-.2-.36-1.020.08-2.120 0 0 .67-.21 2.200.82.64-.18 1.320-.27 2-.27s1.360.09 2 .27c1.530-1.040 2.200-.82 2.200-.82.44 1.100.16 1.920.08 2.120.51.56.82 1.270.82 2.150 0 3.070-1.870 3.750-3.650 3.950.29.25.54.73.54 1.480 0 1.070-.01 1.930-.01 2.200 0 .21.15.46.55.38A8.010 8.010 0 0 0 16 8c0-4.420-3.580-8-8-8z"/></svg>
   <svg width="19" height="18" viewBox="0 0 19 18"><rect y="1.500" width="19" height="15" rx="3.500" fill="#111"/><path d="M7.500 6v6l5-3z" fill="#888"/></svg>
   <svg width="16" height="18" viewBox="0 0 16 18" fill="none" stroke="#111" stroke-width="1.500"><rect x=".8" y="1.500" width="14.400" height="15" rx="4"/><circle cx="8" cy="9" r="3.400"/><circle cx="12.200" cy="4.800" r=".5" fill="#111" stroke-width="1"/></svg>
  </div></section>
 <div class="d-flex justify-content-end"><div class="up-btn d-flex align-items-center justify-content-center"><svg width="22" height="34" viewBox="0 0 22 34"><path d="M11 0L22 12H15V31Q15 34 12 34H10Q7 34 7 31V12H0z" fill="#fff"/></svg></div></div>
</footer>
</body>
</html>
